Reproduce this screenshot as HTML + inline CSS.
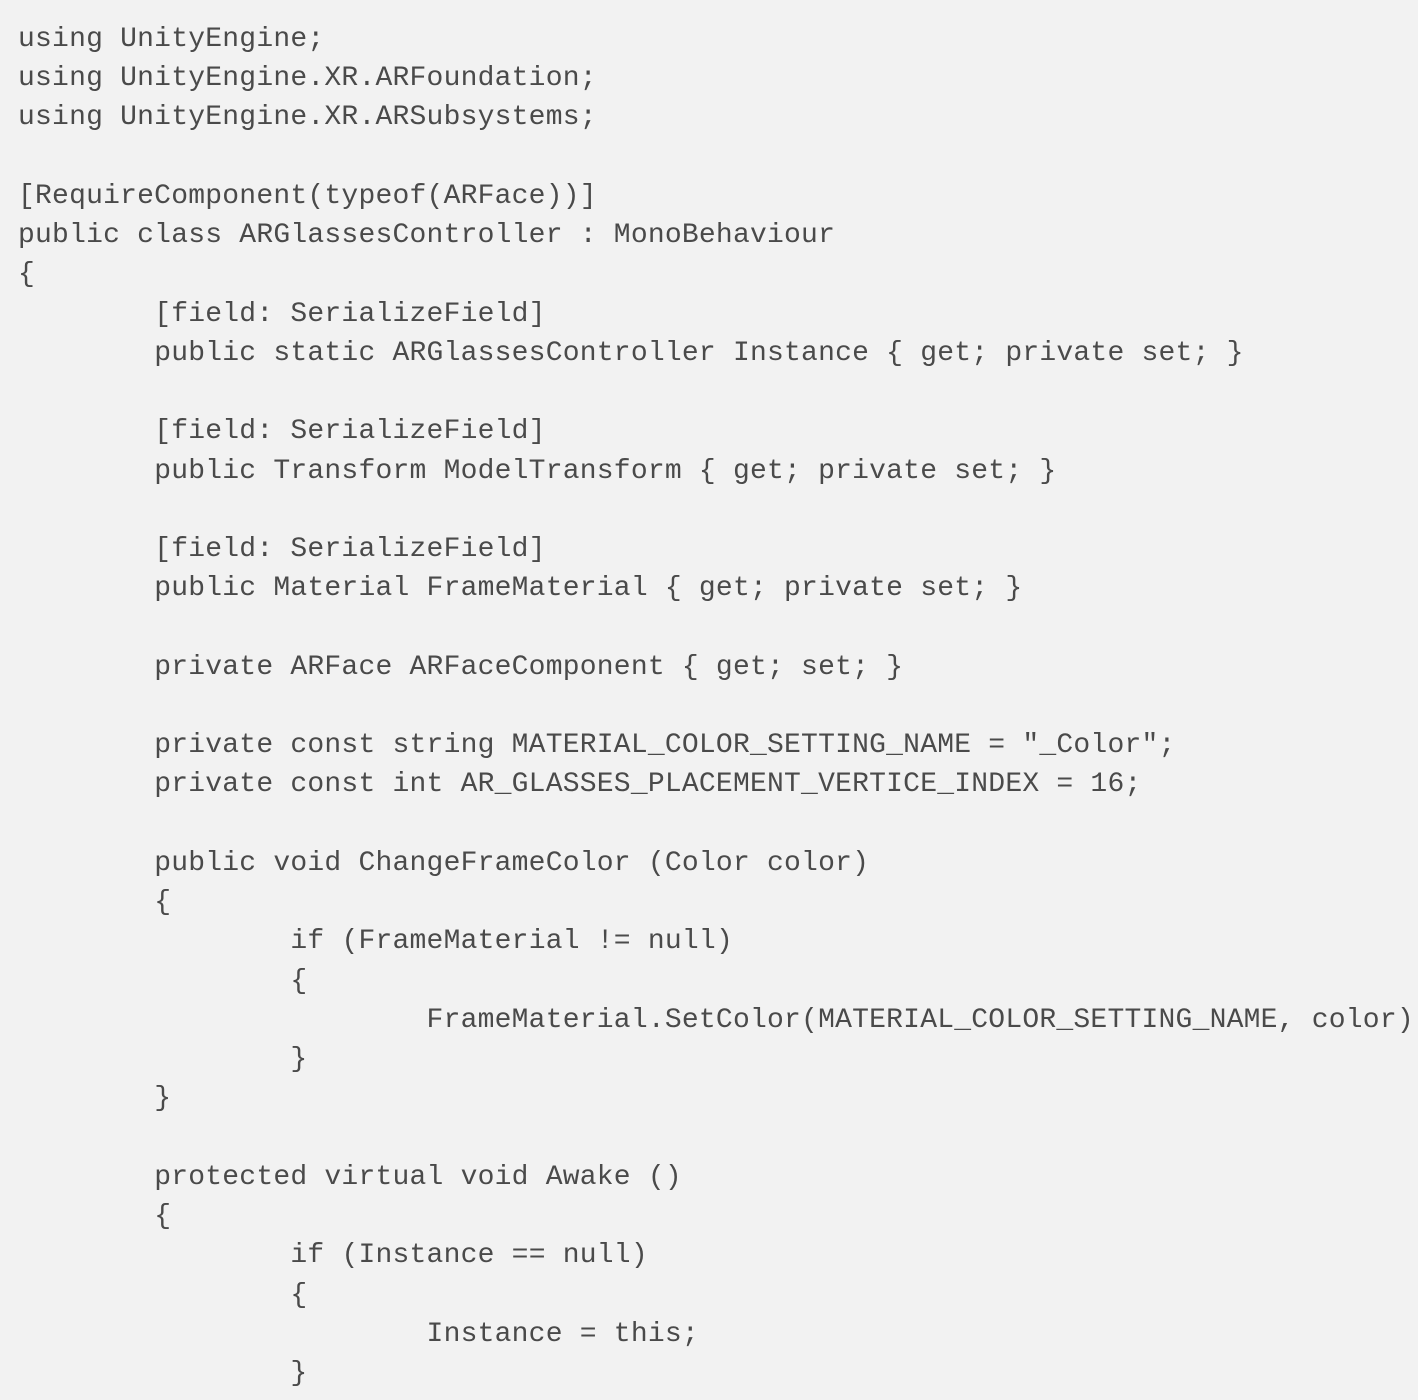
<!DOCTYPE html>
<html><head><meta charset="utf-8"><style>
html,body{margin:0;padding:0;background:#f2f2f2;width:1418px;height:1400px;overflow:hidden}
pre{margin:0;padding:20px 0 0 18px;font-family:"Liberation Mono","Courier New",monospace;font-size:28px;line-height:39.24px;letter-spacing:0.22px;color:#4a4a4a;tab-size:8;-moz-tab-size:8;white-space:pre}
</style></head><body><pre>using UnityEngine;
using UnityEngine.XR.ARFoundation;
using UnityEngine.XR.ARSubsystems;

[RequireComponent(typeof(ARFace))]
public class ARGlassesController : MonoBehaviour
{
	[field: SerializeField]
	public static ARGlassesController Instance { get; private set; }

	[field: SerializeField]
	public Transform ModelTransform { get; private set; }

	[field: SerializeField]
	public Material FrameMaterial { get; private set; }

	private ARFace ARFaceComponent { get; set; }

	private const string MATERIAL_COLOR_SETTING_NAME = "_Color";
	private const int AR_GLASSES_PLACEMENT_VERTICE_INDEX = 16;

	public void ChangeFrameColor (Color color)
	{
		if (FrameMaterial != null)
		{
			FrameMaterial.SetColor(MATERIAL_COLOR_SETTING_NAME, color);
		}
	}

	protected virtual void Awake ()
	{
		if (Instance == null)
		{
			Instance = this;
		}
</pre></body></html>
